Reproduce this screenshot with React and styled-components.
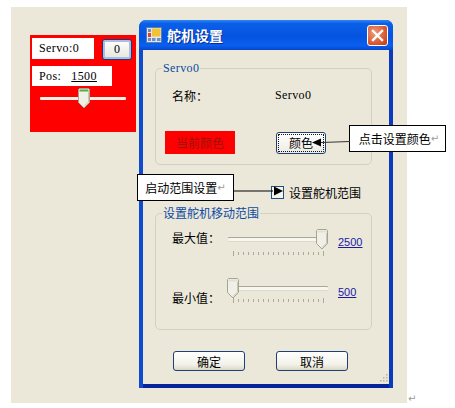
import React from 'react';
import styled, { createGlobalStyle } from 'styled-components';

const GlobalStyle = createGlobalStyle`
    html, body {
        margin: 0;
        padding: 0;
        background: #fff;
    }
    * {
        box-sizing: border-box;
    }
`;

const cjk = `"Noto Sans CJK SC", "Liberation Sans", sans-serif`;
const latin = `"Liberation Serif", "Noto Sans CJK SC", serif`;

const Page = styled.div`
    position: relative;
    width: 455px;
    height: 408px;
    padding: 7px 0 0 11px;
    overflow: hidden;
`;

const Desktop = styled.div`
    display: flex;
    align-items: flex-start;
    width: 396px;
    height: 396px;
    padding: 13px 0 0 19px;
    background: #ebe8da;
`;

const RedPanel = styled.div`
    display: flex;
    flex-direction: column;
    width: 106px;
    height: 97px;
    margin-top: 15px;
    padding: 3px 2px;
    background: #fe0000;
`;

const ServoRow = styled.div`
    display: flex;
    align-items: flex-start;
    gap: 8px;
`;

const WhiteLabel = styled.div`
    display: flex;
    align-items: center;
    gap: 10px;
    width: ${p => p.$w}px;
    height: ${p => p.$h}px;
    padding-left: 7px;
    background: #fff;
    font: 12px ${latin};
    letter-spacing: 0.4px;
    color: #000;
`;

const ServoButton = styled.div`
    display: flex;
    align-items: center;
    justify-content: center;
    width: 30px;
    height: 21px;
    margin-top: 1px;
    border: 1px solid #26366e;
    border-radius: 3px;
    background: linear-gradient(#fff, #e6e6dc);
    box-shadow: inset 0 0 0 2px #a9bde6;
    font: 12px ${latin};
    color: #000;
`;

const Link = styled.span`
    color: ${p => p.$color || '#000'};
    text-decoration: underline;
    font: 12px ${latin};
`;

const PosLabel = styled(WhiteLabel)`
    margin-top: 6px;
`;

const Track = styled.div`
    position: relative;
    height: ${p => p.$h}px;
    margin: ${p => p.$m};
    width: ${p => p.$w}px;
    background: ${p => p.$bg};
    border-radius: 1px;
    box-shadow: ${p => p.$shadow || 'none'};
`;

const ThumbWrap = styled.svg`
    position: absolute;
    left: ${p => p.$left}px;
    top: ${p => p.$top}px;
`;

const Window = styled.div`
    display: flex;
    flex-direction: column;
    width: 254px;
    height: 368px;
    margin-left: 3px;
    border-radius: 7px 7px 0 0;
    background: linear-gradient(90deg, #0f4bd0, #0a3bbf);
    overflow: hidden;
`;

const TitleBar = styled.div`
    display: flex;
    align-items: center;
    flex: none;
    height: 30px;
    padding: 0 5px 0 7px;
    background: linear-gradient(#2b86f5 0, #0a5fe8 12%, #0553e0 55%, #0a5ff0 85%, #0647c8 100%);
`;

const TitleText = styled.div`
    flex: 1;
    margin-left: 5px;
    font: bold 14px ${cjk};
    color: #fff;
    text-shadow: 1px 1px 0 #0a2f90;
`;

const CloseButton = styled.div`
    display: flex;
    align-items: center;
    justify-content: center;
    width: 21px;
    height: 21px;
    border: 1px solid #fff;
    border-radius: 3px;
    background: radial-gradient(circle at 35% 35%, #ee9a7a, #d9562e 65%, #b93a14);
`;

const Body = styled.div`
    position: relative;
    display: flex;
    flex-direction: column;
    flex: 1;
    margin: 0 4px 4px;
    padding: 12px 12px 0;
    background: #ebe8da;
    box-shadow: 0 4px 0 #05249c;
`;

const Group = styled.fieldset`
    position: relative;
    width: 217px;
    height: ${p => p.$h}px;
    margin: ${p => p.$mt || 0}px 0 0;
    padding: 0;
    border: 1px solid #d3d0c0;
    border-radius: 5px;
`;

const Legend = styled.legend`
    margin-left: 6px;
    padding: 0 1px;
    color: #0b4aa0;
    font: 12px/12px ${p => p.$latin ? latin : cjk};
    letter-spacing: ${p => p.$latin ? '0.4px' : '0'};
`;

const NameRow = styled.div`
    display: flex;
    align-items: center;
    margin: 13px 0 0 16px;
    font: 12px ${cjk};
    color: #000;
`;

const NameTitle = styled.span`
    width: 103px;
`;

const NameValue = styled.span`
    font: 12px ${latin};
    letter-spacing: 0.4px;
`;

const ColorRow = styled.div`
    display: flex;
    align-items: center;
    margin: 27px 0 0 9px;
`;

const CurrentColor = styled.div`
    display: flex;
    align-items: center;
    justify-content: center;
    width: 70px;
    height: 23px;
    background: #fe0000;
    font: 12px ${cjk};
    color: #98140c;
`;

const ColorButton = styled.div`
    position: relative;
    display: flex;
    align-items: center;
    justify-content: center;
    width: 50px;
    height: 22px;
    margin-left: 41px;
    border: 1px solid #1f3f78;
    border-radius: 3px;
    background: linear-gradient(#fff, #ecebe2);
    outline: 1px dotted #111;
    outline-offset: -3px;
    font: 12px ${cjk};
    color: #000;
`;

const CheckRow = styled.div`
    display: flex;
    align-items: center;
    height: 14px;
    margin: 20px 0 0 116px;
    font: 12px ${cjk};
    color: #000;
`;

const CheckBox = styled.div`
    width: 13px;
    height: 13px;
    margin-right: 5px;
    border: 1px solid #1c5180;
    background: #f4f3ec;
`;

const SliderRow = styled.div`
    position: relative;
    display: flex;
    height: ${p => p.$h}px;
    margin-top: ${p => p.$mt}px;
    margin-left: 16px;
`;

const RowLabel = styled.span`
    width: 56px;
    margin-top: ${p => p.$top}px;
    font: 12px/16px ${cjk};
    color: #000;
`;

const SliderColumn = styled.div`
    position: relative;
    width: 110px;
`;

const Ticks = styled.svg`
    position: absolute;
    left: 4px;
    top: ${p => p.$top}px;
`;

const ValueLink = styled(Link)`
    margin: ${p => p.$top}px 0 0 0;
    height: 14px;
    font: 11px/14px "Liberation Sans", sans-serif;
`;

const ButtonRow = styled.div`
    display: flex;
    gap: 31px;
    margin: 21px 0 0 18px;
`;

const DialogButton = styled.div`
    display: flex;
    align-items: center;
    justify-content: center;
    width: 72px;
    height: 20px;
    border: 1px solid #1f3f78;
    border-radius: 3px;
    background: linear-gradient(#fff, #f2f1e9 70%, #dcd8c8);
    font: 12px ${cjk};
    color: #000;
`;

const Grip = styled.svg`
    position: absolute;
    right: 1px;
    bottom: 1px;
`;

const Callout = styled.div`
    position: absolute;
    left: ${p => p.$left}px;
    top: ${p => p.$top}px;
    display: flex;
    align-items: center;
    justify-content: center;
    width: 97px;
    height: 27px;
    padding-left: ${p => p.$pad || 0}px;
    border: 1px solid #000;
    background: #fff;
    font: 12px ${cjk};
    color: #000;
`;

const ReturnMark = styled.span`
    color: #9a9a9a;
    font: 10px "DejaVu Sans", sans-serif;
`;

const PageMark = styled(ReturnMark)`
    position: absolute;
    left: 408px;
    top: 393px;
`;

const Arrow = styled.svg`
    position: absolute;
    left: ${p => p.$left}px;
    top: ${p => p.$top}px;
`;

const Thumb = ({ left, top, green }) => (
    <ThumbWrap $left={left} $top={top} width="12" height="21" viewBox="0 0 12 21">
        <path d="M1.5 .5H10.5L11.5 1.5V14.5L6 20L.5 14.5V1.5Z" fill="#f1f0e6" stroke="#a5a596" />
        <path d="M1.5 1.5H10.5V3.5H1.5Z" fill={green ? '#4fb04a' : '#e2e0d2'} />
        <path d="M10.5 4V14L6 18.5" fill="none" stroke="#c9c7b5" />
    </ThumbWrap>
);

const TickMarks = ({ top }) => (
    <Ticks $top={top} width="92" height="6" viewBox="0 0 92 6">
        {Array.from({ length: 19 }).map((_, i) => (
            <line key={i} x1={1.5 + i * 5} x2={1.5 + i * 5} y1={i === 0 || i === 18 ? 0 : 1} y2={i === 0 || i === 18 ? 5 : 4} stroke="#9b9989" strokeWidth=".8" />
        ))}
    </Ticks>
);

const WindowIcon = () => (
    <svg width="16" height="16" viewBox="0 0 16 16">
        <rect x=".5" y=".5" width="15" height="15" fill="#dfe6f2" stroke="#5a7cb0" />
        <rect x="6" y="1.5" width="8.5" height="8" fill="#f2c230" />
        <rect x="2" y="6" width="3" height="4" fill="#d6452c" />
        <rect x="2" y="11" width="3" height="3" fill="#6f8fc0" />
        <rect x="6" y="11" width="3.5" height="3" fill="#6f8fc0" />
        <rect x="11" y="11" width="3.5" height="3" fill="#6f8fc0" />
        <rect x="2" y="2" width="3" height="3" fill="#6f8fc0" />
    </svg>
);

const App = () => (
    <>
        <GlobalStyle />
        <Page>
            <Desktop>
                <RedPanel>
                    <ServoRow>
                        <WhiteLabel $w={62} $h={21}>Servo:0</WhiteLabel>
                        <ServoButton>0</ServoButton>
                    </ServoRow>
                    <PosLabel $w={80} $h={20}>Pos:<Link>1500</Link></PosLabel>
                    <Track $w={86} $h={3} $m="11px 0 0 8px" $bg="#f2efe4">
                        <Thumb left={38} top={-9} green />
                    </Track>
                </RedPanel>
                <Window>
                    <TitleBar>
                        <WindowIcon />
                        <TitleText>舵机设置</TitleText>
                        <CloseButton>
                            <svg width="13" height="13" viewBox="0 0 13 13">
                                <path d="M2 2L11 11M11 2L2 11" stroke="#fff" strokeWidth="2.4" strokeLinecap="square" />
                            </svg>
                        </CloseButton>
                    </TitleBar>
                    <Body>
                        <Group $h={103}>
                            <Legend $latin>Servo0</Legend>
                            <NameRow>
                                <NameTitle>名称：</NameTitle>
                                <NameValue>Servo0</NameValue>
                            </NameRow>
                            <ColorRow>
                                <CurrentColor>当前颜色</CurrentColor>
                                <ColorButton>颜色</ColorButton>
                            </ColorRow>
                        </Group>
                        <CheckRow>
                            <CheckBox />
                            设置舵机范围
                        </CheckRow>
                        <Group $h={123} $mt={8}>
                            <Legend>设置舵机移动范围</Legend>
                            <SliderRow $h={30} $mt={13}>
                                <RowLabel $top={-2}>最大值：</RowLabel>
                                <SliderColumn>
                                    <Track $w={100} $h={3} $m="6px 0 0 0" $bg="#f7f6ef" $shadow="0 -1px 0 #a9a798, 0 1px 0 #dcdacb">
                                        <Thumb left={88} top={-9} />
                                    </Track>
                                    <TickMarks top={19} />
                                </SliderColumn>
                                <ValueLink $top={3} $color="#1a1aa6">2500</ValueLink>
                            </SliderRow>
                            <SliderRow $h={30} $mt={19}>
                                <RowLabel $top={9}>最小值：</RowLabel>
                                <SliderColumn>
                                    <Track $w={100} $h={3} $m="6px 0 0 0" $bg="#f7f6ef" $shadow="0 -1px 0 #a9a798, 0 1px 0 #dcdacb">
                                        <Thumb left={-1} top={-9} />
                                    </Track>
                                    <TickMarks top={17} />
                                </SliderColumn>
                                <ValueLink $top={4} $color="#1a1aa6">500</ValueLink>
                            </SliderRow>
                        </Group>
                        <ButtonRow>
                            <DialogButton>确定</DialogButton>
                            <DialogButton>取消</DialogButton>
                        </ButtonRow>
                        <Grip width="10" height="10" viewBox="0 0 10 10">
                            <path d="M8 1h1.5v1.5H8zM5 4h1.5v1.5H5zM8 4h1.5v1.5H8zM2 7h1.5v1.5H2zM5 7h1.5v1.5H5zM8 7h1.5v1.5H8z" fill="#b8b5a4" />
                        </Grip>
                    </Body>
                </Window>
            </Desktop>
            <Callout $left={349} $top={125} $pad={3}>点击设置颜色<ReturnMark>↵</ReturnMark></Callout>
            <Callout $left={137} $top={174}>启动范围设置<ReturnMark>↵</ReturnMark></Callout>
            <Arrow $left={312} $top={136} width="38" height="12" viewBox="0 0 38 12">
                <path d="M9 6.5L38 5.5" stroke="#333" />
                <path d="M0 6.5L9 2.5V10.5Z" fill="#000" />
            </Arrow>
            <Arrow $left={233} $top={185} width="50" height="12" viewBox="0 0 50 12">
                <path d="M0 6H40" stroke="#000" />
                <path d="M50 6L41 1.5V10.5Z" fill="#000" />
            </Arrow>
            <PageMark>↵</PageMark>
        </Page>
    </>
);

export default App;
